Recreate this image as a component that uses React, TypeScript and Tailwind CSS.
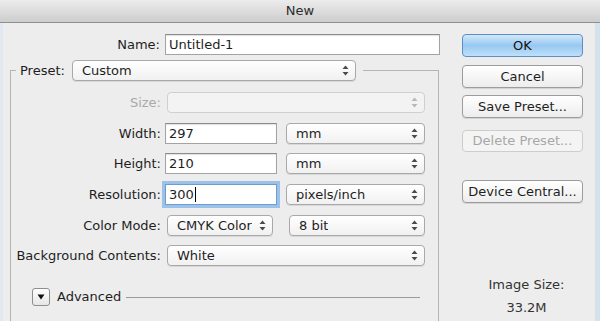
import type { ReactNode } from "react";

const FONT = "font-['DejaVu_Sans',_'Liberation_Sans',_sans-serif]";

function Arrows({ disabled = false }: { disabled?: boolean }) {
  const c = disabled ? "#b8b8b8" : "#4a4a4a";
  return (
    <svg width="7" height="11" viewBox="0 0 7 11" className="shrink-0">
      <path d="M3.5 0.5 L6.5 4 L0.5 4 Z" fill={c} />
      <path d="M3.5 10.5 L6.5 7 L0.5 7 Z" fill={c} />
    </svg>
  );
}

function Select({
  value,
  width,
  disabled = false,
}: {
  value?: string;
  width: string;
  disabled?: boolean;
}) {
  return (
    <div
      className={`flex h-[21px] ${width} items-center justify-between rounded-[4px] border pl-[9px] pr-[6px] ${
        disabled
          ? "border-[#cfcfcf] bg-[#f3f3f3]"
          : "border-[#a9a9a9] bg-gradient-to-b from-white to-[#f1f1f1] shadow-[0_1px_0_#d8d8d8]"
      }`}
    >
      <span className="truncate">{value}</span>
      <Arrows disabled={disabled} />
    </div>
  );
}

function Input({
  value,
  width,
  focused = false,
}: {
  value: string;
  width: string;
  focused?: boolean;
}) {
  return (
    <div
      className={`flex h-[21px] ${width} items-center border bg-white pl-[3px] ${
        focused
          ? "border-[#6e9bd0] shadow-[0_0_0_3px_#9cc2ea]"
          : "border-[#a3a3a3] border-t-[#8c8c8c] shadow-[inset_0_1px_1px_#e0e0e0]"
      }`}
    >
      <span>{value}</span>
      {focused ? <span className="ml-px h-[15px] w-px bg-black" /> : null}
    </div>
  );
}

function Button({
  children,
  variant = "normal",
}: {
  children: ReactNode;
  variant?: "normal" | "default" | "disabled";
}) {
  const styles = {
    normal:
      "h-[23px] border-[#9c9c9c] bg-gradient-to-b from-white to-[#ededed] text-[#1e1e1e] shadow-[0_1px_0_#d4d4d4]",
    default:
      "h-[23px] border-[#5d8ec2] bg-gradient-to-b from-[#d2e8fb] via-[#97c8f1] to-[#bfe0fa] text-[#111]",
    disabled:
      "h-[22px] border-[#cdcdcd] bg-[#f4f4f4] text-[#a8a8a8]",
  }[variant];
  return (
    <div
      className={`flex w-[121px] items-center justify-center whitespace-nowrap rounded-[4px] border ${styles}`}
    >
      {children}
    </div>
  );
}

function Row({
  label,
  top,
  dim = false,
  children,
}: {
  label: string;
  top: string;
  dim?: boolean;
  children: ReactNode;
}) {
  return (
    <div className={`flex h-[21px] items-center ${top}`}>
      <span
        className={`w-[150px] shrink-0 whitespace-nowrap text-right ${dim ? "text-[#a9a9a9]" : ""}`}
      >
        {label}
      </span>
      {children}
    </div>
  );
}

export default function App() {
  return (
    <div
      className={`flex h-[321px] w-[600px] flex-col overflow-hidden bg-[#ededed] text-[13px] text-[#1e1e1e] ${FONT}`}
    >
      {/* Title bar */}
      <div className="flex h-[23px] shrink-0 items-center justify-center border-b border-[#8f8f8f] bg-gradient-to-b from-[#ececec] to-[#cdcdcd] text-[13px] text-[#2c2c2c]">
        New
      </div>

      <div className="flex flex-1 border-l-[3px] border-r-[5px] border-l-[#e2e8ef] border-r-[#d4e2ee]">
        {/* Left side */}
        <div className="flex w-[436px] shrink-0 flex-col">
          <div className="mt-[11px] flex h-[21px] items-center">
            <span className="w-[157px] shrink-0 text-right">Name:</span>
            <div className="ml-[5px]">
              <Input value="Untitled-1" width="w-[275px]" />
            </div>
          </div>

          <fieldset className="ml-[7px] mt-[5px] w-[429px] border border-[#b5b5b5] pb-[40px]">
            <legend className="ml-[5px] pl-[4px] pr-[7px]">
              <div className="flex items-center">
                <span>Preset:</span>
                <div className="ml-[7px]">
                  <Select value="Custom" width="w-[284px]" />
                </div>
              </div>
            </legend>

            <Row label="Size:" top="mt-[11px]" dim>
              <div className="ml-[6px]">
                <Select width="w-[258px]" disabled />
              </div>
            </Row>
            <Row label="Width:" top="mt-[10px]">
              <div className="ml-[4px]">
                <Input value="297" width="w-[112px]" />
              </div>
              <div className="ml-[9px]">
                <Select value="mm" width="w-[139px]" />
              </div>
            </Row>
            <Row label="Height:" top="mt-[9px]">
              <div className="ml-[4px]">
                <Input value="210" width="w-[112px]" />
              </div>
              <div className="ml-[9px]">
                <Select value="mm" width="w-[139px]" />
              </div>
            </Row>
            <Row label="Resolution:" top="mt-[10px]">
              <div className="ml-[4px]">
                <Input value="300" width="w-[112px]" focused />
              </div>
              <div className="ml-[9px]">
                <Select value="pixels/inch" width="w-[139px]" />
              </div>
            </Row>
            <Row label="Color Mode:" top="mt-[10px]">
              <div className="ml-[6px]">
                <Select value="CMYK Color" width="w-[106px]" />
              </div>
              <div className="ml-[16px]">
                <Select value="8 bit" width="w-[136px]" />
              </div>
            </Row>
            <Row label="Background Contents:" top="mt-[9px]">
              <div className="ml-[6px]">
                <Select value="White" width="w-[258px]" />
              </div>
            </Row>

            {/* Advanced */}
            <div className="mt-[22px] flex h-[18px] items-center">
              <div className="ml-[21px] flex h-[18px] w-[18px] items-center justify-center rounded-[3px] border border-[#8e8e8e] bg-gradient-to-b from-white to-[#e6e6e6]">
                <svg width="8" height="6" viewBox="0 0 8 6">
                  <path d="M0.5 0.5 L7.5 0.5 L4 5.5 Z" fill="#111" />
                </svg>
              </div>
              <span className="ml-[7px]">Advanced</span>
              <div className="ml-[5px] mr-[18px] h-px flex-1 bg-[#9a9a9a]" />
            </div>
          </fieldset>
        </div>

        {/* Right side */}
        <div className="ml-[23px] flex flex-col items-center">
          <div className="mt-[11px]">
            <Button variant="default">OK</Button>
          </div>
          <div className="mt-[8px]">
            <Button>Cancel</Button>
          </div>
          <div className="mt-[7px]">
            <Button>Save Preset...</Button>
          </div>
          <div className="mt-[12px]">
            <Button variant="disabled">Delete Preset...</Button>
          </div>
          <div className="mt-[28px]">
            <Button>Device Central...</Button>
          </div>
          <p className="mt-[74px] pl-[8px] leading-[16px] text-[#333]">Image Size:</p>
          <p className="mt-[7px] pl-[8px] leading-[16px] text-[#333]">33.2M</p>
        </div>
      </div>
    </div>
  );
}
